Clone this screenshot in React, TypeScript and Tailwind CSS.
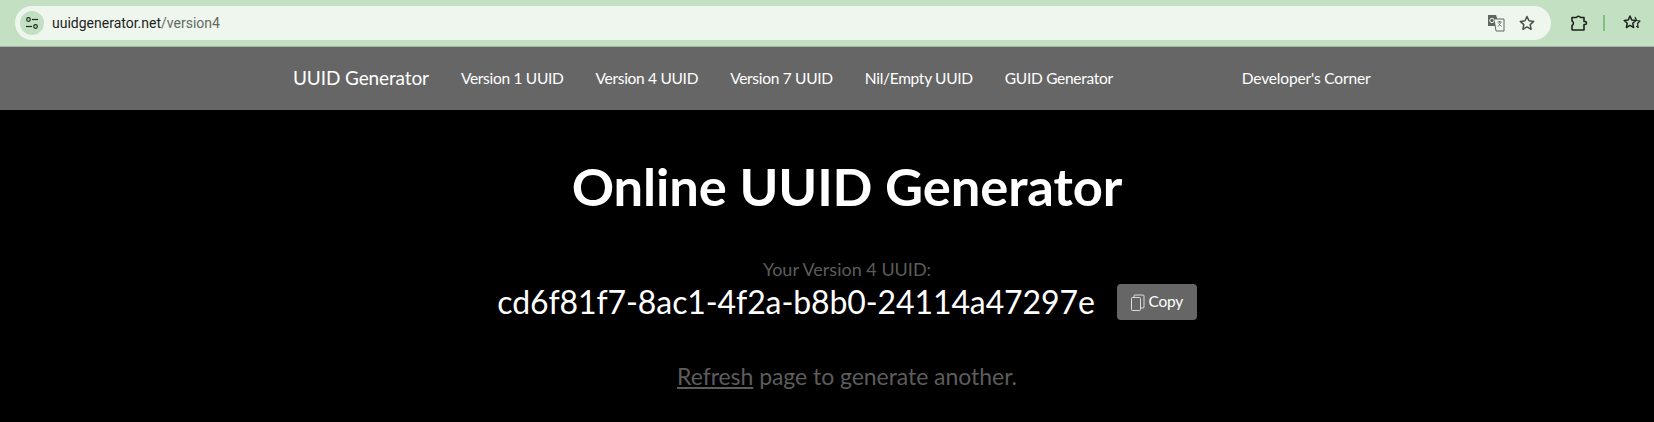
import React from 'react';

const navLinks = ['Version 1 UUID', 'Version 4 UUID', 'Version 7 UUID', 'Nil/Empty UUID', 'GUID Generator'];

const App: React.FC = () => {
  return (
    <div className="h-[422px] w-[1654px] overflow-hidden bg-black font-['Lato',sans-serif]">
      {/* Browser toolbar */}
      <div className="flex h-[46px] items-start bg-[#c4e0c3] pt-[6px]">
        <div className="ml-[15px] flex h-[34px] w-[1536px] items-center rounded-full bg-[#eff6ee]">
          <div className="ml-[5px] flex h-[24px] w-[24px] items-center justify-center rounded-full bg-[#c4e0c3]">
            <svg width="14" height="14" viewBox="0 0 14 14" fill="none" stroke="#1f2a20" strokeWidth="1.2">
              <circle cx="3.5" cy="3.5" r="1.8" />
              <path d="M7 3.5h6" />
              <circle cx="10.5" cy="10.5" r="1.8" />
              <path d="M1 10.500h6" />
            </svg>
          </div>
          <span className="ml-[8px] font-['Roboto',sans-serif] text-[14px] text-[#1c231d]">
            uuidgenerator.net<span className="text-[#5f6b62]">/version4</span>
          </span>
          <div className="ml-auto flex items-center gap-[14px] pr-[16px]">
            <svg width="18" height="18" viewBox="0 0 18 18">
              <path d="M1 1h8l1 3v8H1z" fill="#5f6662" />
              <path d="M7 5h10v12H9z" fill="#eff6ee" stroke="#5f6662" strokeWidth="1" />
              <circle cx="5" cy="6.5" r="2.2" fill="none" stroke="#eff6ee" strokeWidth="1" />
              <path d="M10.500 8h4M12.500 7v1.500M14 8.500l-3 4M11.500 9.500l3 3" fill="none" stroke="#5f6662" strokeWidth="0.9" />
            </svg>
            <svg width="16" height="16" viewBox="0 0 16 16" fill="none" stroke="#4a524c" strokeWidth="1.5" strokeLinejoin="round">
              <path d="M8 1.500l2 4.300 4.700.6-3.500 3.200.9 4.700L8 11.900l-4.100 2.400.9-4.700L1.300 6.400 6 5.800z" />
            </svg>
          </div>
        </div>
        <div className="ml-[19px] mt-[8px] flex items-center">
          <svg width="18" height="18" viewBox="0 0 18 18" fill="none" stroke="#1c231d" strokeWidth="1.6" strokeLinejoin="round">
            <path d="M2 3.500h4.500a2.200 2.200 0 0 1 4 0H14v4h1a1.500 1.500 0 0 1 0 3h-1v5.500H2.500a1 1 0 0 1-.5-.5v-4a2.500 2.500 0 0 0 0-4.500z" />
          </svg>
          <div className="ml-[15px] h-[16px] w-[2px] bg-[#7fc27f]" />
          <svg className="ml-[18px]" width="18" height="18" viewBox="0 0 18 18" fill="none" stroke="#1c231d" strokeWidth="1.5" strokeLinejoin="round">
            <path d="M7 2l1.700 3.900 4.100.5-3 2.900.8 4.200L7 11.400l-3.600 2.100.8-4.200-3-2.900 4.100-.5z" />
            <path d="M12 3l1.500 3.500 3.500.5-2.500 2.500.7 4-2 -1.200" strokeWidth="1.200" />
          </svg>
        </div>
      </div>
      <div className="h-px bg-[#a3b5a2]" />

      {/* Site nav */}
      <nav className="flex h-[63px] items-center bg-[#666666] pl-[293px] text-white">
        <span className="mr-[32px] text-[19px] tracking-[-0.12px]">UUID Generator</span>
        <ul className="flex gap-[32px] text-[15.5px] tracking-[-0.3px]">
          {navLinks.map(link => (
            <li key={link}>{link}</li>
          ))}
        </ul>
        <span className="ml-[129px] text-[15.5px] tracking-[-0.15px]">Developer's Corner</span>
      </nav>

      {/* Main content */}
      <main className="flex flex-col items-center pl-[40px] text-center">
        <h1 className="mt-[42px] text-[52.5px] leading-[67px] font-bold tracking-[-0.1px] text-white">Online UUID Generator</h1>
        <p className="mt-[38px] text-[18px] leading-[24px] text-[#5c5c5c]">Your Version 4 UUID:</p>
        <div className="mt-[2px] flex items-center">
          <span className="text-[32px] leading-[38px] tracking-[-0.1px] text-white">cd6f81f7-8ac1-4f2a-b8b0-24114a47297e</span>
          <button className="ml-[22px] flex h-[36px] w-[80px] items-center justify-center gap-[4px] rounded-[4px] bg-[#666666] text-[15.5px] tracking-[-0.3px] text-white">
            <svg width="14" height="17" viewBox="0 0 14 17" fill="none" stroke="#dddddd" strokeWidth="1">
              <rect x="0.500" y="3.500" width="9" height="13" rx="1" />
              <path d="M3 3.500V2a1 1 0 0 1 1-1h8a1 1 0 0 1 1 1v11a1 1 0 0 1-1 1h-2.500" />
            </svg>
            Copy
          </button>
        </div>
        <p className="mt-[41px] text-[23px] leading-[29px] tracking-[-0.05px] text-[#5c5c5c]">
          <span className="underline">Refresh</span> page to generate another.
        </p>
      </main>
    </div>
  );
};

export default App;
